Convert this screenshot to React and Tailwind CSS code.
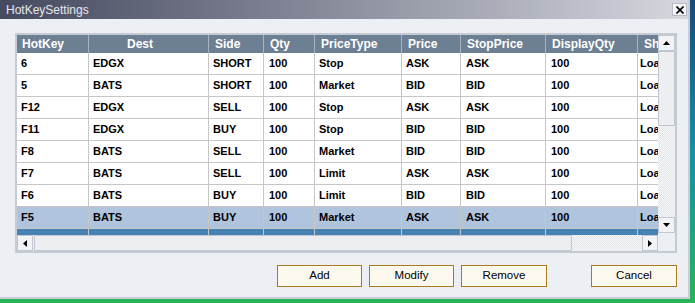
const COLS = [
  { key: 'hotkey', label: 'HotKey', w: 'w-[72px]', hp: 'pl-[5px]', cp: 'pl-[4px]' },
  { key: 'dest', label: 'Dest', w: 'w-[120px]', hp: 'pl-[38px]', cp: 'pl-[4px]' },
  { key: 'side', label: 'Side', w: 'w-[55px]', hp: 'pl-[6px]', cp: 'pl-[4px]' },
  { key: 'qty', label: 'Qty', w: 'w-[51px]', hp: 'pl-[6px]', cp: 'pl-[5px]' },
  { key: 'type', label: 'PriceType', w: 'w-[87px]', hp: 'pl-[6px]', cp: 'pl-[4px]' },
  { key: 'price', label: 'Price', w: 'w-[59px]', hp: 'pl-[6px]', cp: 'pl-[4px]' },
  { key: 'stop', label: 'StopPrice', w: 'w-[85px]', hp: 'pl-[6px]', cp: 'pl-[5px]' },
  { key: 'disp', label: 'DisplayQty', w: 'w-[92px]', hp: 'pl-[6px]', cp: 'pl-[5px]' },
  { key: 'show', label: 'ShowQty', w: 'w-[80px]', hp: 'pl-[6px]', cp: 'pl-[2px]' },
];

const ROWS = [
  ['6', 'EDGX', 'SHORT', '100', 'Stop', 'ASK', 'ASK', '100', 'Load'],
  ['5', 'BATS', 'SHORT', '100', 'Market', 'BID', 'BID', '100', 'Load'],
  ['F12', 'EDGX', 'SELL', '100', 'Stop', 'ASK', 'ASK', '100', 'Load'],
  ['F11', 'EDGX', 'BUY', '100', 'Stop', 'BID', 'BID', '100', 'Load'],
  ['F8', 'BATS', 'SELL', '100', 'Market', 'BID', 'BID', '100', 'Load'],
  ['F7', 'BATS', 'SELL', '100', 'Limit', 'ASK', 'ASK', '100', 'Load'],
  ['F6', 'BATS', 'BUY', '100', 'Limit', 'BID', 'BID', '100', 'Load'],
  ['F5', 'BATS', 'BUY', '100', 'Market', 'ASK', 'ASK', '100', 'Load'],
];

const track =
  'bg-[image:repeating-conic-gradient(#e2e4e8_0_25%,#f7f8fa_0_50%)] bg-[length:2px_2px]';

function Arrow({ dir }) {
  const pts = {
    up: '0,4 7,4 3.5,0',
    down: '0,0 7,0 3.5,4',
    left: '4,0 4,7 0,3.5',
    right: '0,0 0,7 4,3.5',
  }[dir];
  const vert = dir === 'up' || dir === 'down';
  return (
    <svg width={vert ? 7 : 4} height={vert ? 4 : 7} viewBox={vert ? '0 0 7 4' : '0 0 4 7'}>
      <polygon points={pts} fill="#000" />
    </svg>
  );
}

function SbButton({ dir, className }) {
  return (
    <div
      className={`flex items-center justify-center bg-[#f1f3f6] border border-[#c3c7cf] ${className}`}
    >
      <Arrow dir={dir} />
    </div>
  );
}

function Grid() {
  return (
    <div className="w-[641px] h-[200px] overflow-hidden bg-white">
      <div className="flex h-[18px] bg-[#6d7f92] text-white font-bold text-[12px] w-max">
        {COLS.map((c) => (
          <div
            key={c.key}
            className={`${c.w} ${c.hp} shrink-0 flex items-center border-r border-[#a9b3be] whitespace-nowrap overflow-hidden`}
          >
            {c.label}
          </div>
        ))}
      </div>
      {ROWS.map((r, i) => (
        <div
          key={i}
          className={`flex h-[22px] w-max border-b border-[#c6c6c6] text-[11px] font-bold text-black ${
            i === ROWS.length - 1 ? 'bg-[#b0c4de]' : 'bg-white'
          }`}
        >
          {r.map((v, j) => (
            <div
              key={j}
              className={`${COLS[j].w} ${COLS[j].cp} shrink-0 flex items-center border-r border-[#c6c6c6] whitespace-nowrap overflow-hidden`}
            >
              {v}
            </div>
          ))}
        </div>
      ))}
      <div className="flex h-[6px] w-max bg-[#4682b4]">
        {COLS.map((c) => (
          <div key={c.key} className={`${c.w} shrink-0 border-r border-[#c6c6c6]`} />
        ))}
      </div>
    </div>
  );
}

function Btn({ children, className = '' }) {
  return (
    <button
      className={`h-[22px] bg-[#fdf9ef] border border-[#a77a1c] text-[11.5px] text-black ${className}`}
    >
      {children}
    </button>
  );
}

export default function App() {
  return (
    <div
      className="w-[695px] h-[303px] overflow-hidden bg-linear-to-b from-[#17497a] via-[#1591a6] to-[#29b556]"
      style={{ fontFamily: '"Liberation Sans", Arial, sans-serif' }}
    >
      <div className="w-[690px] h-[299px] flex flex-col bg-[#eceff4] border-r-2 border-b-2 border-[#c9cdd4]">
        {/* title bar */}
        <div className="h-[19px] flex items-center justify-between bg-linear-to-r from-[#464a5f] via-[#8c8f9e] to-[#d5d8de] pl-[6px] pr-[1px]">
          <span className="text-[12px] text-[#e6e8ee] leading-none">HotKeySettings</span>
          <div className="w-[15px] h-[13px] flex items-center justify-center bg-[#f3f4f6] border border-[#b9bcc4]">
            <svg width="8" height="8" viewBox="0 0 8 8">
              <path d="M0.5 0.5 L7.5 7.5 M7.5 0.5 L0.5 7.5" stroke="#000" strokeWidth="1.6" />
            </svg>
          </div>
        </div>

        {/* grid container */}
        <div className="ml-[15px] mt-[14px] w-[662px] h-[220px] border-2 border-[#c6cad2] flex flex-col">
          <div className="flex h-[200px]">
            <Grid />
            <div className="w-[17px] h-[198px] flex flex-col">
              <SbButton dir="up" className="h-[16px]" />
              <div className="h-[75px] bg-[#eceef2] border border-[#bfc3cb] rounded-[1px]" />
              <div className={`flex-1 ${track}`} />
              <SbButton dir="down" className="h-[16px]" />
            </div>
          </div>
          <div className="flex h-[16px]">
            <SbButton dir="left" className="w-[16px]" />
            <div className="ml-[1px] w-[538px] bg-[#eceef2] border border-[#c3c7cf] rounded-[1px]" />
            <div className={`w-[70px] ${track}`} />
            <SbButton dir="right" className="w-[16px]" />
            <div className="w-[17px]" />
          </div>
        </div>

        {/* buttons */}
        <div className="flex mt-[12px] ml-[277px]">
          <Btn className="w-[85px]">Add</Btn>
          <Btn className="w-[85px] ml-[7px]">Modify</Btn>
          <Btn className="w-[86px] ml-[7px]">Remove</Btn>
          <Btn className="w-[86px] ml-[44px]">Cancel</Btn>
        </div>
      </div>
    </div>
  );
}
